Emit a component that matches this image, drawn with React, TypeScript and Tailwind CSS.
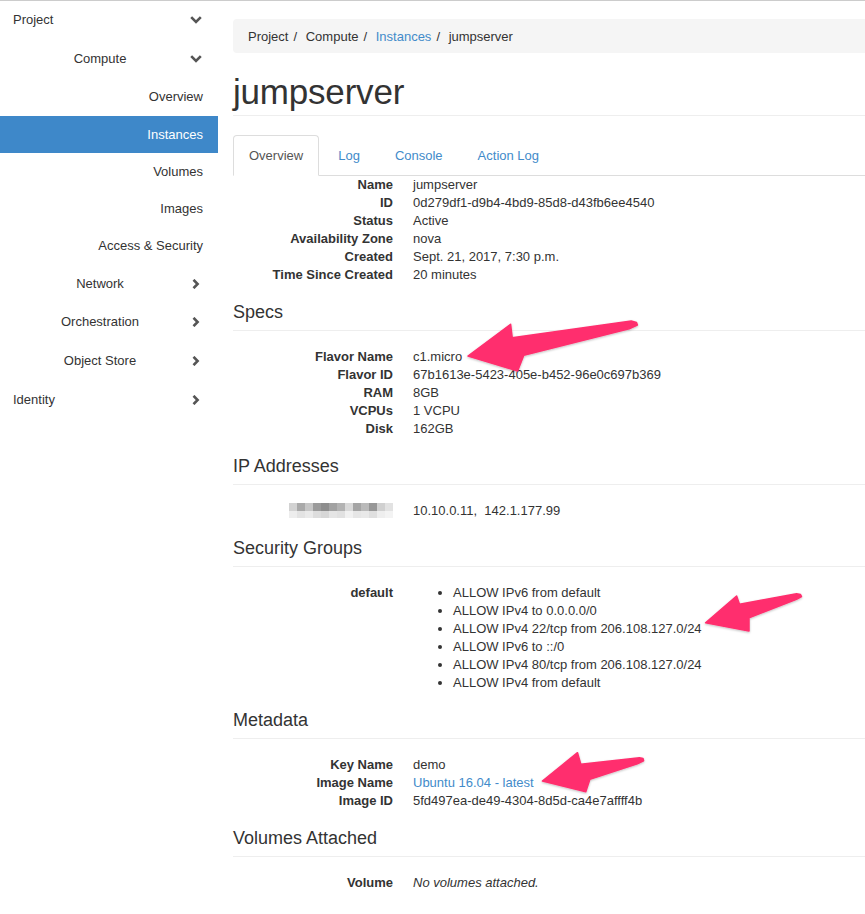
import React from "react";

const ChevronDown = () => (
  <svg width="12" height="8" viewBox="0 0 12 8" className="block">
    <polyline points="1.2,1.2 6,6 10.8,1.2" fill="none" stroke="#555" strokeWidth="2.6" />
  </svg>
);
const ChevronRight = () => (
  <svg width="12" height="10" viewBox="0 0 12 10" className="block">
    <polyline points="3.5,0.8 7.6,5 3.5,9.2" fill="none" stroke="#555" strokeWidth="2.6" />
  </svg>
);

function SideTop({ label, open, h }: { label: string; open: boolean; h: string }) {
  return (
    <div className={`flex items-center pl-[13px] pr-4 ${h}`}>
      <span className="flex-1">{label}</span>
      <span className="w-3 flex justify-center">{open ? <ChevronDown /> : <ChevronRight />}</span>
    </div>
  );
}
function SideGroup({ label, open, h }: { label: string; open: boolean; h: string }) {
  return (
    <div className={`flex items-center pl-[10px] pr-4 ${h}`}>
      <span className="flex-1 text-center">{label}</span>
      <span className="w-3 flex justify-center">{open ? <ChevronDown /> : <ChevronRight />}</span>
    </div>
  );
}
function SideItem({ label, active, h }: { label: string; active?: boolean; h: string }) {
  return (
    <div
      className={`flex items-center justify-end pr-[15px] ${h} ${active ? "bg-[#3e88c9] text-white" : ""}`}
    >
      {label}
    </div>
  );
}

function Row({ label, children }: { label: React.ReactNode; children: React.ReactNode }) {
  return (
    <div className="grid grid-cols-[160px_1fr] gap-x-5 leading-[18px]">
      <div className="text-right font-bold">{label}</div>
      <div>{children}</div>
    </div>
  );
}

function Section({ title, children }: { title: string; children: React.ReactNode }) {
  return (
    <div>
      <h4 className="mt-[18px] pb-2 border-b border-[#eeeeee] text-[18px] leading-[20px]">{title}</h4>
      <div className="mt-[17px]">{children}</div>
    </div>
  );
}

const topShades = ["#d2d2d2", "#a9a9a9", "#c6c6c6", "#9b9b9b", "#8e8e8e", "#a2a2a2", "#b3b3b3", "#d9d9d9", "#a5a5a5", "#bababa", "#979797", "#d0d0d0", "#e2e2e2"];
const botShades = ["#ededed", "#e3e3e3", "#eaeaea", "#dddddd", "#d7d7d7", "#e5e5e5", "#e1e1e1", "#f1f1f1", "#e6e6e6", "#e9e9e9", "#dfdfdf", "#eeeeee", "#f3f3f3"];

const Blur = () => (
  <div className="inline-flex flex-col align-middle">
    <div className="flex">
      {topShades.map((c, i) => (
        <div key={i} className="w-[8px] h-[8px]" style={{ background: c }} />
      ))}
    </div>
    <div className="flex">
      {botShades.map((c, i) => (
        <div key={i} className="w-[8px] h-[7px]" style={{ background: c }} />
      ))}
    </div>
  </div>
);

export default function App() {
  return (
    <div
      className="relative w-[865px] h-[914px] overflow-hidden bg-white text-[#333] text-[13px] border-t border-[#cccccc]"
      style={{ fontFamily: '"Liberation Sans", Arial, sans-serif' }}
    >
      <div className="flex">
        {/* Sidebar */}
        <div className="w-[218px] shrink-0">
          <SideTop label="Project" open h="h-[38px]" />
          <SideGroup label="Compute" open h="h-[39px]" />
          <SideItem label="Overview" h="h-[38px]" />
          <SideItem label="Instances" active h="h-[37px]" />
          <SideItem label="Volumes" h="h-[37px]" />
          <SideItem label="Images" h="h-[37px]" />
          <SideItem label="Access & Security" h="h-[38px]" />
          <SideGroup label="Network" open={false} h="h-[38px]" />
          <SideGroup label="Orchestration" open={false} h="h-[38px]" />
          <SideGroup label="Object Store" open={false} h="h-[39px]" />
          <SideTop label="Identity" open={false} h="h-[39px]" />
        </div>

        {/* Main */}
        <div className="flex-1 pl-[15px]">
          <div className="mt-[18px] h-[34px] mr-[-10px] rounded bg-[#f5f5f5] flex items-center px-[15px] pt-px">
            <span>Project</span>
            <span className="px-[5px]">/{"\u00a0"}</span>
            <span>Compute</span>
            <span className="px-[5px]">/{"\u00a0"}</span>
            <span className="text-[#428bca]">Instances</span>
            <span className="px-[5px]">/{"\u00a0"}</span>
            <span>jumpserver</span>
          </div>

          <h1 className="mt-[19px] pb-[3px] border-b border-[#eeeeee] text-[35px] leading-[40px] tracking-[-0.2px]">
            jumpserver
          </h1>

          <div className="mt-[19px] flex border-b border-[#dddddd]">
            <div className="-mb-px h-[41px] px-[15px] flex items-center border border-[#dddddd] border-b-white rounded-t bg-white text-[#555]">
              Overview
            </div>
            <div className="ml-[3px] -mb-px h-[41px] px-[16px] flex items-center text-[#428bca]">Log</div>
            <div className="ml-[3px] -mb-px h-[41px] px-[16px] flex items-center text-[#428bca]">Console</div>
            <div className="ml-[3px] -mb-px h-[41px] px-[16px] flex items-center text-[#428bca]">Action Log</div>
          </div>

          <div>
            <Row label="Name">jumpserver</Row>
            <Row label="ID">0d279df1-d9b4-4bd9-85d8-d43fb6ee4540</Row>
            <Row label="Status">Active</Row>
            <Row label="Availability Zone">nova</Row>
            <Row label="Created">Sept. 21, 2017, 7:30 p.m.</Row>
            <Row label="Time Since Created">20 minutes</Row>
          </div>

          <Section title="Specs">
            <Row label="Flavor Name">c1.micro</Row>
            <Row label="Flavor ID">67b1613e-5423-405e-b452-96e0c697b369</Row>
            <Row label="RAM">8GB</Row>
            <Row label="VCPUs">1 VCPU</Row>
            <Row label="Disk">162GB</Row>
          </Section>

          <Section title="IP Addresses">
            <Row label={<div className="flex justify-end pt-[1px]"><Blur /></div>}>
              10.10.0.11,{"\u00a0"} 142.1.177.99
            </Row>
          </Section>

          <Section title="Security Groups">
            <Row label="default">
              <ul className="list-disc pl-10">
                <li>ALLOW IPv6 from default</li>
                <li>ALLOW IPv4 to 0.0.0.0/0</li>
                <li>ALLOW IPv4 22/tcp from 206.108.127.0/24</li>
                <li>ALLOW IPv6 to ::/0</li>
                <li>ALLOW IPv4 80/tcp from 206.108.127.0/24</li>
                <li>ALLOW IPv4 from default</li>
              </ul>
            </Row>
          </Section>

          <Section title="Metadata">
            <Row label="Key Name">demo</Row>
            <Row label="Image Name">
              <span className="text-[#428bca]">Ubuntu 16.04 - latest</span>
            </Row>
            <Row label="Image ID">5fd497ea-de49-4304-8d5d-ca4e7affff4b</Row>
          </Section>

          <Section title="Volumes Attached">
            <Row label="Volume">
              <span className="italic">No volumes attached.</span>
            </Row>
          </Section>
        </div>
      </div>

      {/* Annotation arrows */}
      <svg className="absolute left-0 top-0 pointer-events-none" width="865" height="914" viewBox="0 0 865 914">
        <defs>
          <filter id="sh" x="-20%" y="-20%" width="140%" height="140%">
            <feDropShadow dx="0" dy="1" stdDeviation="1.2" floodColor="#000" floodOpacity="0.25" />
          </filter>
        </defs>
        <g fill="#ff2f6e" filter="url(#sh)" strokeLinejoin="round" stroke="#ff2f6e" strokeWidth="1.5">
          <polygon points="468,355 510.6,323.3 512.2,336.7 631.2,320 636.5,321.5 637.4,324 629.2,327.7 523.8,354.3 517.6,370" />
          <polygon points="705.6,621.7 736.6,595 739.5,603.3 796.5,592.7 800.5,593.5 801.5,595.5 796.5,598.3 749,616.7 749,630" />
          <polygon points="542.4,780 577.5,751.7 580.8,763.3 639.5,756.7 643,757.5 643.6,759.8 637.4,762.7 589.9,778.3 585.8,790.7" />
        </g>
      </svg>
    </div>
  );
}
